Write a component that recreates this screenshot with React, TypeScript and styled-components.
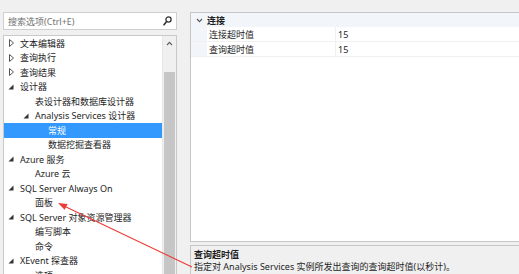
import React from "react";
import styled, { createGlobalStyle } from "styled-components";

const GlobalStyle = createGlobalStyle`
  html, body { margin: 0; padding: 0; }
  body {
    width: 519px;
    height: 274px;
    overflow: hidden;
    background: #f0f0f0;
    font-family: "Noto Sans", "Noto Sans CJK SC", sans-serif;
    font-size: 9px;
    color: #1e1e1e;
  }
`;

type TreeItem = {
  label: string;
  level: number;
  toggle?: "open" | "closed";
  selected?: boolean;
};

const treeItems: TreeItem[] = [
  { label: "文本编辑器", level: 0, toggle: "closed" },
  { label: "查询执行", level: 0, toggle: "closed" },
  { label: "查询结果", level: 0, toggle: "closed" },
  { label: "设计器", level: 0, toggle: "open" },
  { label: "表设计器和数据库设计器", level: 1 },
  { label: "Analysis Services 设计器", level: 1, toggle: "open" },
  { label: "常规", level: 2, selected: true },
  { label: "数据挖掘查看器", level: 2 },
  { label: "Azure 服务", level: 0, toggle: "open" },
  { label: "Azure 云", level: 1 },
  { label: "SQL Server Always On", level: 0, toggle: "open" },
  { label: "面板", level: 1 },
  { label: "SQL Server 对象资源管理器", level: 0, toggle: "open" },
  { label: "编写脚本", level: 1 },
  { label: "命令", level: 1 },
  { label: "XEvent 探查器", level: 0, toggle: "open" },
  { label: "选项", level: 1 },
];

// left padding per tree level, so text lands at x 20 / 35 / 48
const levelIndent = [2, 17, 30];

const Page = styled.div`
  position: relative;
  display: flex;
  width: 519px;
  height: 274px;
  overflow: hidden;
`;

const LeftColumn = styled.div`
  display: flex;
  flex-direction: column;
  gap: 5px;
  width: 174px;
  margin: 12px 0 0 3px;
  flex-shrink: 0;
`;

const SearchBox = styled.div`
  display: flex;
  align-items: center;
  justify-content: space-between;
  height: 16px;
  padding: 0 4px 0 4px;
  background: #fff;
  border: 1px solid #cfcfcf;
  color: #717171;
`;

const TreePanel = styled.div`
  display: flex;
  flex: 1;
  background: #fff;
  border: 1px solid #c9c9c9;
  border-bottom: none;
  overflow: hidden;
`;

const TreeList = styled.div`
  flex: 1;
  display: flex;
  flex-direction: column;
`;

const TreeRow = styled.div<{ $level: number; $selected?: boolean }>`
  display: flex;
  align-items: center;
  height: 14.5px;
  flex-shrink: 0;
  padding-left: ${(p) => levelIndent[p.$level]}px;
  background: ${(p) => (p.$selected ? "#3399ff" : "transparent")};
  color: ${(p) => (p.$selected ? "#fff" : "#1e1e1e")};
  white-space: nowrap;
`;

const Toggle = styled.span`
  display: flex;
  align-items: center;
  justify-content: center;
  width: 10px;
  height: 10px;
  margin-right: 4px;
`;

const LeafSpacer = styled.span`
  display: inline-block;
  width: 14px;
`;

const Scrollbar = styled.div`
  display: flex;
  flex-direction: column;
  width: 13px;
  background: #f0f0f0;
  border-left: 1px solid #e6e6e6;
`;

const ScrollArrow = styled.div`
  display: flex;
  justify-content: center;
  align-items: center;
  height: 15px;
`;

const ScrollThumb = styled.div`
  flex: 1;
  margin: 21px 1px 0 1px;
  background: #c6c6c6;
`;

const RightColumn = styled.div`
  display: flex;
  flex-direction: column;
  width: 340px;
  margin: 12px 0 0 13px;
  flex-shrink: 0;
`;

const PropertyGrid = styled.div`
  height: 228px;
  background: #fff;
  border: 1px solid #c6c6c6;
  border-right: none;
  display: flex;
  flex-direction: column;
`;

const CategoryRow = styled.div`
  display: flex;
  align-items: center;
  height: 14px;
  background: #f2f5fa;
  font-weight: bold;
`;

const Expander = styled.span`
  display: flex;
  justify-content: center;
  align-items: center;
  width: 16px;
`;

const PropRow = styled.div`
  display: flex;
  height: 14px;
  border-bottom: 1px solid #f0f0f0;
`;

const Gutter = styled.div`
  width: 16px;
  background: #f2f5fa;
`;

const NameCell = styled.div`
  display: flex;
  align-items: center;
  width: 126px;
  padding-left: 2px;
  border-right: 1px solid #f0f0f0;
`;

const ValueCell = styled.div`
  display: flex;
  align-items: center;
  padding-left: 2px;
`;

const Splitter = styled.div`
  height: 3px;
`;

const Description = styled.div`
  flex: 1;
  display: flex;
  flex-direction: column;
  padding: 3px 0 0 3px;
  border-top: 1px solid #c6c6c6;
  border-left: 1px solid #c6c6c6;
  background: #f0f0f0;
`;

const DescTitle = styled.div`
  font-weight: bold;
  line-height: 12px;
`;

const DescText = styled.div`
  line-height: 12px;
`;

const Overlay = styled.svg`
  position: absolute;
  left: 0;
  top: 0;
  pointer-events: none;
`;

const ClosedArrow = () => (
  <svg width="5" height="8" viewBox="0 0 5 8">
    <path d="M0.5 0.5 L4.5 4 L0.5 7.5 Z" fill="none" stroke="#555" strokeWidth="1" />
  </svg>
);

const OpenArrow = () => (
  <svg width="6" height="6" viewBox="0 0 6 6">
    <path d="M5.5 0.5 L5.5 5.5 L0.5 5.5 Z" fill="#333" />
  </svg>
);

const SearchIcon = () => (
  <svg width="9" height="10" viewBox="0 0 9 10">
    <circle cx="5.5" cy="3.5" r="2.6" fill="none" stroke="#333" strokeWidth="1.3" />
    <path d="M3.6 5.5 L1 8.8" stroke="#333" strokeWidth="1.6" strokeLinecap="round" />
  </svg>
);

export default function App() {
  return (
    <>
      <GlobalStyle />
      <Page>
        <LeftColumn>
          <SearchBox>
            <span>搜索选项(Ctrl+E)</span>
            <SearchIcon />
          </SearchBox>
          <TreePanel>
            <TreeList>
              {treeItems.map((item, i) => (
                <TreeRow key={i} $level={item.level} $selected={item.selected}>
                  {item.toggle ? (
                    <Toggle>{item.toggle === "open" ? <OpenArrow /> : <ClosedArrow />}</Toggle>
                  ) : (
                    <LeafSpacer />
                  )}
                  {item.label}
                </TreeRow>
              ))}
            </TreeList>
            <Scrollbar>
              <ScrollArrow>
                <svg width="7" height="5" viewBox="0 0 7 5">
                  <path d="M1 4 L3.5 1.3 L6 4" fill="none" stroke="#606060" strokeWidth="1.2" />
                </svg>
              </ScrollArrow>
              <ScrollThumb />
            </Scrollbar>
          </TreePanel>
        </LeftColumn>
        <RightColumn>
          <PropertyGrid>
            <CategoryRow>
              <Expander>
                <svg width="7" height="5" viewBox="0 0 7 5">
                  <path d="M1 1 L3.5 3.6 L6 1" fill="none" stroke="#555" strokeWidth="1.1" />
                </svg>
              </Expander>
              <span>连接</span>
            </CategoryRow>
            <PropRow>
              <Gutter />
              <NameCell>连接超时值</NameCell>
              <ValueCell>15</ValueCell>
            </PropRow>
            <PropRow>
              <Gutter />
              <NameCell>查询超时值</NameCell>
              <ValueCell>15</ValueCell>
            </PropRow>
          </PropertyGrid>
          <Splitter />
          <Description>
            <DescTitle>查询超时值</DescTitle>
            <DescText>指定对 Analysis Services 实例所发出查询的查询超时值(以秒计)。</DescText>
          </Description>
        </RightColumn>
        <Overlay width="519" height="274" viewBox="0 0 519 274">
          <line x1="192" y1="267" x2="64" y2="206" stroke="#ec3b35" strokeWidth="1.1" />
          <path d="M58 203 L67.6 204 L64.6 209.8 Z" fill="#ec3b35" />
        </Overlay>
      </Page>
    </>
  );
}
